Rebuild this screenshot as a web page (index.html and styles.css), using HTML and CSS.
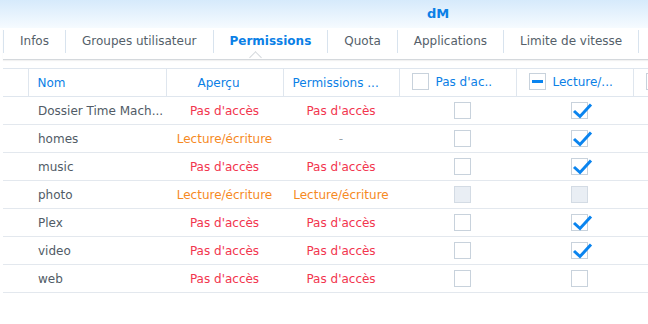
FILE: index.html
```html
<!DOCTYPE html>
<html>
<head>
    <meta charset="UTF-8">
    <title>dM</title>
    <link rel="stylesheet" href="styles.css">
</head>
<body>
<div class="titlebar"><span class="title">dM</span></div>
<div class="tabs">
    <div class="tab">Infos</div>
    <div class="tab">Groupes utilisateur</div>
    <div class="tab active">Permissions<span class="notch"></span></div>
    <div class="tab">Quota</div>
    <div class="tab">Applications</div>
    <div class="tab">Limite de vitesse</div>
    <div class="tab last"></div>
</div>
<div class="grid-wrap">
<table class="grid">
    <colgroup>
        <col style="width:25px">
        <col style="width:138px">
        <col style="width:117px">
        <col style="width:116px">
        <col style="width:117px">
        <col style="width:117px">
        <col style="width:117px">
    </colgroup>
    <thead>
    <tr>
        <th></th>
        <th class="left">Nom</th>
        <th class="center">Aperçu</th>
        <th class="left pad">Permissions ...</th>
        <th class="chkhead"><span class="box"></span>Pas d'ac..</th>
        <th class="chkhead"><span class="box minus"><i></i></span>Lecture/...</th>
        <th class="chkhead"><span class="box"></span></th>
    </tr>
    </thead>
    <tbody>
    <tr>
        <td></td><td class="name">Dossier Time Mach...</td>
        <td class="no">Pas d'accès</td><td class="no">Pas d'accès</td>
        <td class="chk"><span class="box"></span></td>
        <td class="chk"><span class="box on"><svg viewBox="0 0 20 17" width="20" height="17"><path d="M2 9 L8 14.5 L19 2.5"/></svg></span></td>
        <td></td>
    </tr>
    <tr>
        <td></td><td class="name">homes</td>
        <td class="rw">Lecture/écriture</td><td class="dash">-</td>
        <td class="chk"><span class="box"></span></td>
        <td class="chk"><span class="box on"><svg viewBox="0 0 20 17" width="20" height="17"><path d="M2 9 L8 14.5 L19 2.5"/></svg></span></td>
        <td></td>
    </tr>
    <tr>
        <td></td><td class="name">music</td>
        <td class="no">Pas d'accès</td><td class="no">Pas d'accès</td>
        <td class="chk"><span class="box"></span></td>
        <td class="chk"><span class="box on"><svg viewBox="0 0 20 17" width="20" height="17"><path d="M2 9 L8 14.5 L19 2.5"/></svg></span></td>
        <td></td>
    </tr>
    <tr>
        <td></td><td class="name">photo</td>
        <td class="rw">Lecture/écriture</td><td class="rw">Lecture/écriture</td>
        <td class="chk"><span class="box off"></span></td>
        <td class="chk"><span class="box off"></span></td>
        <td></td>
    </tr>
    <tr>
        <td></td><td class="name">Plex</td>
        <td class="no">Pas d'accès</td><td class="no">Pas d'accès</td>
        <td class="chk"><span class="box"></span></td>
        <td class="chk"><span class="box on"><svg viewBox="0 0 20 17" width="20" height="17"><path d="M2 9 L8 14.5 L19 2.5"/></svg></span></td>
        <td></td>
    </tr>
    <tr>
        <td></td><td class="name">video</td>
        <td class="no">Pas d'accès</td><td class="no">Pas d'accès</td>
        <td class="chk"><span class="box"></span></td>
        <td class="chk"><span class="box on"><svg viewBox="0 0 20 17" width="20" height="17"><path d="M2 9 L8 14.5 L19 2.5"/></svg></span></td>
        <td></td>
    </tr>
    <tr>
        <td></td><td class="name">web</td>
        <td class="no">Pas d'accès</td><td class="no">Pas d'accès</td>
        <td class="chk"><span class="box"></span></td>
        <td class="chk"><span class="box"></span></td>
        <td></td>
    </tr>
    </tbody>
</table>
</div>
</body>
</html>
```
FILE: styles.css
```css
body {
    margin: 0;
    width: 648px;
    height: 324px;
    overflow: hidden;
    background-color: #ffffff;
    font-family: "DejaVu Sans", Verdana, sans-serif;
    font-size: 12px;
    color: #515b66;
}
.titlebar {
    height: 28px;
    background: linear-gradient(#d6eafb, #f6fbff);
    display: flex;
    align-items: center;
    padding-left: 427px;
}
.title {
    font-weight: bold;
    font-size: 13px;
    color: #0b80e6;
    margin-top: -2px;
}
.tabs {
    display: flex;
    margin-left: 3px;
    height: 32px;
    padding-top: 2px;
    box-sizing: border-box;
    border-bottom: 1px solid #d4d8dc;
    box-shadow: 0 1px 1px rgba(0, 0, 0, 0.05);
    overflow: hidden;
}
.tab {
    position: relative;
    height: 23px;
    line-height: 23px;
    padding: 0 16px;
    border-left: 1px solid #d8e3ee;
    color: #555f6a;
    white-space: nowrap;
}
.tab.active {
    color: #0b80e6;
    font-weight: bold;
}
.tab.last {
    padding: 0;
}
.notch {
    position: absolute;
    left: 37px;
    top: 23px;
    width: 8px;
    height: 8px;
    background: #ffffff;
    border-top: 1px solid #d4d8dc;
    border-left: 1px solid #d4d8dc;
    transform: rotate(45deg);
}
.grid-wrap {
    margin: 8px 0 0 3px;
    width: 645px;
    overflow: hidden;
}
.grid {
    table-layout: fixed;
    border-collapse: collapse;
    width: 747px;
}
.grid th {
    height: 27px;
    padding: 0;
    font-weight: normal;
    color: #0b80e6;
    border-top: 1px solid #dfe6ee;
    border-bottom: 1px solid #dfe6ee;
    border-left: 1px solid #dfe6ee;
    white-space: nowrap;
    overflow: hidden;
}
.grid th:first-child {
    border-left: none;
}
.grid th.left {
    text-align: left;
    padding-left: 9px;
}
.grid th.center {
    text-align: center;
    padding-right: 12px;
}
.grid th.chkhead {
    text-align: left;
    padding-left: 12px;
}
.grid th .box {
    vertical-align: middle;
    margin: -2px 7px 0 0;
}
.grid td {
    height: 27px;
    padding: 0;
    border-bottom: 1px solid #e3e8ee;
    text-align: center;
    white-space: nowrap;
    overflow: hidden;
}
.grid td.name {
    text-align: left;
    padding-left: 10px;
    color: #515b66;
}
.no {
    color: #f2354e;
}
.rw {
    color: #f68a1f;
}
.dash {
    color: #9aa3ab;
}
.grid td.chk {
    padding-left: 9px;
}
.box {
    position: relative;
    display: inline-block;
    width: 17px;
    height: 17px;
    box-sizing: border-box;
    border: 1px solid #c8d2dc;
    background: #ffffff;
    vertical-align: middle;
}
.box.off {
    background: #e9eef4;
    border-color: #d3dbe4;
}
.box svg {
    position: absolute;
    left: 0;
    top: -1px;
    overflow: visible;
}
.box svg path {
    fill: none;
    stroke: #0a84ef;
    stroke-width: 3;
    stroke-linejoin: miter;
}
.box.minus i {
    position: absolute;
    left: 2px;
    top: 6px;
    width: 11px;
    height: 3px;
    background: #0a84ef;
}
```
